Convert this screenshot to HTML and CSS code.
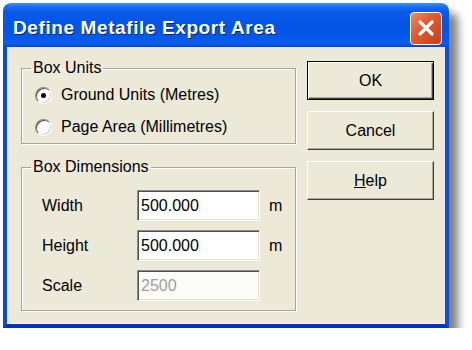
FILE: index.html
```html
<!DOCTYPE html>
<html>
<head>
  <link rel="stylesheet" href="styles.css">
</head>
<body>
  <div class="window">
    <div class="titlebar">
      <span class="title">Define Metafile Export Area</span>
      <button class="close" title="Close">
        <svg width="20" height="20" viewBox="0 0 20 20">
          <path d="M4 4 L16 16 M16 4 L4 16" stroke="#fff" stroke-width="3.2" stroke-linecap="round" fill="none"/>
        </svg>
      </button>
    </div>

    <div class="client">
      <div class="groups">
        <fieldset class="group units">
          <legend>Box Units</legend>
          <label class="radio-row"><span class="radio checked"></span>Ground Units (Metres)</label>
          <label class="radio-row"><span class="radio"></span>Page Area (Millimetres)</label>
        </fieldset>

        <fieldset class="group dims">
          <legend>Box Dimensions</legend>
          <div class="field-row">
            <span class="field-label">Width</span>
            <input class="field" value="500.000">
            <span class="unit">m</span>
          </div>
          <div class="field-row">
            <span class="field-label">Height</span>
            <input class="field" value="500.000">
            <span class="unit">m</span>
          </div>
          <div class="field-row">
            <span class="field-label">Scale</span>
            <input class="field" value="2500" disabled>
          </div>
        </fieldset>
      </div>

      <div class="buttons">
        <button class="btn default">OK</button>
        <button class="btn">Cancel</button>
        <button class="btn"><u>H</u>elp</button>
      </div>
    </div>
  </div>
</body>
</html>
```

FILE: styles.css
```css
body {
  margin: 0;
  background: #fff;
  font-family: "Liberation Sans", Arial, sans-serif;
  font-size: 16px;
  color: #000;
}

.window {
  margin: 3px 0 0 3px;
  width: 446px;
  border-radius: 8px 8px 0 0;
  box-shadow: 9px 10px 9px rgba(0, 0, 0, 0.5);
}

/* title bar */
.titlebar {
  height: 44px;
  display: flex;
  align-items: center;
  justify-content: space-between;
  padding: 0 7px 0 10px;
  border-radius: 8px 8px 0 0;
  background: linear-gradient(to bottom, #3a93ff 0%, #1a6ff5 8%, #0a5ae6 20%, #0355e4 50%, #0558ea 80%, #0a5ff0 92%, #0445c8 100%);
}

.title {
  padding-top: 6px;
  font-size: 19px;
  font-weight: bold;
  letter-spacing: 0.6px;
  color: #fff;
  text-shadow: 1px 1px 0 #0a1e7a;
}

.close {
  margin-top: 6px;
  width: 32px;
  height: 33px;
  padding: 0;
  display: flex;
  align-items: center;
  justify-content: center;
  border: 1px solid #fff;
  border-radius: 4px;
  background: linear-gradient(135deg, #f08a68 0%, #e25b32 40%, #c8401a 100%);
}

/* dialog body */
.client {
  box-sizing: border-box;
  height: 281px;
  display: flex;
  gap: 11px;
  padding: 12px 11px 0 14px;
  background: #ece9d8;
  border: 4px solid #0a4be0;
  border-top: 0;
  border-bottom-color: #0831c0;
  box-shadow: inset 0 -1px 0 #f8f6ee;
}

.groups {
  width: 275px;
  display: flex;
  flex-direction: column;
  gap: 14px;
}

.group {
  margin: 0;
  padding: 0;
  border: 1px solid #a8a497;
  box-shadow: inset 1px 1px 0 #fff, 1px 1px 0 #fff;
}

.group legend {
  margin-left: 9px;
  padding: 0 2px;
  line-height: 18px;
}

.units {
  display: flex;
  flex-direction: column;
  gap: 12px;
  padding: 8px 0 6px 0;
}

.radio-row {
  height: 20px;
  display: flex;
  align-items: center;
  gap: 9px;
  padding-left: 13px;
}

.radio {
  position: relative;
  box-sizing: border-box;
  width: 17px;
  height: 17px;
  border-radius: 50%;
  border: 1px solid;
  border-color: #8a8a8a #fff #fff #8a8a8a;
  box-shadow: inset 1px 1px 0 #505050, inset -1px -1px 0 #d4d0c8;
  background: #fff;
}

.radio.checked::after {
  content: "";
  position: absolute;
  left: 5px;
  top: 5px;
  width: 5px;
  height: 5px;
  border-radius: 50%;
  background: #000;
}

.dims {
  display: flex;
  flex-direction: column;
  gap: 9px;
  padding: 14px 0 9px 0;
}

.field-row {
  height: 31px;
  display: flex;
  align-items: center;
  padding-left: 20px;
}

.field-label {
  width: 95px;
}

.field {
  box-sizing: border-box;
  width: 123px;
  height: 31px;
  margin: 0 9px 0 0;
  padding: 0 3px;
  font-family: inherit;
  font-size: 16px;
  color: #000;
  background: #fff;
  border: 1px solid;
  border-color: #8a8a8a #fff #fff #8a8a8a;
  box-shadow: inset 1px 1px 0 #505050, inset -1px -1px 0 #e4e1d4;
}

.field:disabled {
  color: #a0a0a0;
  background: #fbfbf8;
}

/* buttons */
.buttons {
  width: 127px;
  margin-top: 2px;
  display: flex;
  flex-direction: column;
  gap: 11px;
}

.btn {
  height: 39px;
  padding: 0;
  font-family: inherit;
  font-size: 16px;
  color: #000;
  background: #ece9d8;
  border: 1px solid;
  border-color: #fff #404040 #404040 #fff;
  box-shadow: inset -1px -1px 0 #aca899;
}

.btn.default {
  border-color: #000;
  box-shadow: inset 1px 1px 0 #fff, inset -1px -1px 0 #404040, inset -2px -2px 0 #aca899;
}
```
